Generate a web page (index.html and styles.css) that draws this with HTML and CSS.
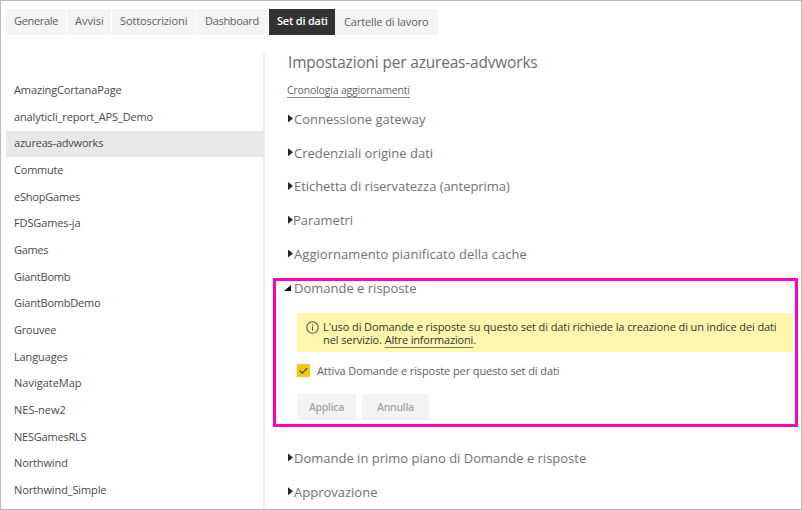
FILE: index.html
```
<!DOCTYPE html>
<html lang="it">
<head>
<meta charset="utf-8">
<title>Impostazioni</title>
<link rel="stylesheet" href="styles.css">
</head>
<body>
<div class="page">
  <nav class="tabs">
    <a class="tab tab-generale t3">Generale</a>
    <a class="tab tab-avvisi">Avvisi</a>
    <a class="tab tab-sottoscrizioni t1">Sottoscrizioni</a>
    <a class="tab tab-dashboard t3">Dashboard</a>
    <a class="tab tab-dati active t2">Set di dati</a>
    <a class="tab tab-cartelle t1">Cartelle di lavoro</a>
  </nav>
  <div class="columns">
    <ul class="datasets">
      <li class="t1">AmazingCortanaPage</li>
      <li class="t1">analyticli_report_APS_Demo</li>
      <li class="t2 selected">azureas-advworks</li>
      <li class="t2">Commute</li>
      <li class="t2">eShopGames</li>
      <li class="t1">FDSGames-ja</li>
      <li class="t3">Games</li>
      <li class="t2">GiantBomb</li>
      <li class="t2">GiantBombDemo</li>
      <li class="t2">Grouvee</li>
      <li class="t1">Languages</li>
      <li>NavigateMap</li>
      <li>NES-new2</li>
      <li class="t2">NESGamesRLS</li>
      <li class="t1">Northwind</li>
      <li class="t1">Northwind_Simple</li>
    </ul>
    <main class="settings">
      <h1>Impostazioni per azureas-advworks</h1>
      <a class="history">Cronologia aggiornamenti</a>
      <div class="sections">
        <h2>Connessione gateway</h2>
        <h2>Credenziali origine dati</h2>
        <h2 class="tight">Etichetta di riservatezza (anteprima)</h2>
        <h2 class="near">Parametri</h2>
        <h2 class="loose">Aggiornamento pianificato della cache</h2>
      </div>
      <section class="qna">
        <h2 class="open">Domande e risposte</h2>
        <div class="notice">
          <svg class="info" width="13" height="13" viewBox="0 0 13 13"><circle cx="6.5" cy="6.5" r="5.7" fill="none" stroke="#5c5638" stroke-width="1.1"/><path d="M6.5 5.3v4.4M6.5 3.2v1.2" stroke="#a0432c" stroke-width="1.1"/></svg>
          <p>L'uso di Domande e risposte su questo set di dati richiede la creazione di un indice dei dati<br>nel servizio. <a>Altre informazioni</a>.</p>
        </div>
        <div class="enable">
          <svg width="13" height="13" viewBox="0 0 13 13"><rect width="13" height="13" fill="#f2c811"/><path d="M2.7 6.6l2.5 2.5 5-5" fill="none" stroke="#4a421c" stroke-width="1.2"/></svg>
          <span>Attiva Domande e risposte per questo set di dati</span>
        </div>
        <div class="actions">
          <button class="apply">Applica</button>
          <button class="cancel">Annulla</button>
        </div>
      </section>
      <div class="sections after">
        <h2>Domande in primo piano di Domande e risposte</h2>
        <h2>Approvazione</h2>
      </div>
    </main>
  </div>
</div>
</body>
</html>
```
FILE: styles.css
```
* { box-sizing: border-box; margin: 0; padding: 0; }
body { font: 11px/13px "Open Sans", "Noto Sans", sans-serif; color: #4a4a4a; background: #fff; }
.page { width: 802px; height: 510px; border: 1px solid #b9b9b9; padding: 8px 3px 0 5px; overflow: hidden; }

.t1 { letter-spacing: -.12px; }
.t2 { letter-spacing: -.21px; }
.t3 { letter-spacing: -.32px; }

.tabs { display: flex; gap: 1px; height: 26px; }
.tab { padding-left: 8px; line-height: 24px; background: #f4f4f4; color: #606060; white-space: nowrap; }
.tab-generale { width: 60px; }
.tab-avvisi { width: 44px; }
.tab-sottoscrizioni { width: 84px; }
.tab-dashboard { width: 71px; }
.tab-dati { width: 66px; }
.tab-cartelle { width: 103px; line-height: 26px; padding-left: 9px; margin-left: -1px; }
.tab.active { background: #333; color: #fff; font-weight: 600; }

.columns { display: flex; height: 474px; }
.datasets { list-style: none; width: 257px; padding-top: 42px; }
.datasets li { height: 26.66px; padding-left: 8px; line-height: 26px; white-space: nowrap; }
.datasets .selected { width: 258px; background: linear-gradient(#e8e8e8, #e8e8e8) 0 .5px / 100% 26px no-repeat; }

.settings { flex: 1; margin-top: 18px; border-left: 2px solid #ececec; padding-left: 8px; }
h1 { font-size: 15.4px; line-height: 20px; font-weight: 400; letter-spacing: -.14px; color: #6c6c6c; padding-left: 15px; }
.history { display: block; width: 123px; margin: 10px 0 0 14px; height: 15px; font-size: 10.5px; line-height: 15px; letter-spacing: -.18px; color: #666; border-bottom: 1px solid #8c8c8c; white-space: nowrap; }
h2 { display: flex; align-items: center; font-size: 13px; font-weight: 400; line-height: 20px; color: #727272; white-space: nowrap; height: 33.8px; }
h2::before { content: ""; width: 5px; height: 8px; margin: -1px 1px 0 0; background: #1d2733; clip-path: polygon(0 0, 100% 50%, 0 100%); }
.tight { letter-spacing: -.05px; }
.near::before { margin-right: 0; }
.loose { letter-spacing: .05px; }
.sections { padding: 4px 0 0 15px; }

.qna { width: 525px; height: 149px; margin: 7px 0 0; border: 3px solid #ff00c0; padding: 0 2px 0 21px; }
h2.open { height: 14px; margin-left: -13px; margin-bottom: 18px; }
h2.open::before { width: 7px; height: 6px; margin: 0 3px 0 0; background: #111; clip-path: polygon(100% 0, 100% 100%, 0 100%); }
.notice { display: flex; height: 39px; padding: 7px 0 0 9px; background: #fff7ab; color: #333; letter-spacing: -.1px; }
.info { margin-top: 1px; }
.notice p { margin-left: 4px; white-space: nowrap; }
.notice a { letter-spacing: -.19px; text-decoration: underline 1px #777; text-underline-offset: 3px; text-decoration-skip-ink: none; }
.enable { display: flex; gap: 7px; margin-top: 12px; height: 13px; color: #606060; letter-spacing: -.1px; }
.actions { display: flex; gap: 6px; margin-top: 17px; }
button { height: 26px; border: 0; background: #f3f3f3; color: #a6a6ae; font: 600 10.5px/26px "Open Sans", sans-serif; letter-spacing: -.3px; }
.apply { width: 59px; }
.cancel { width: 67px; }
.after { padding-top: 14px; }
```
